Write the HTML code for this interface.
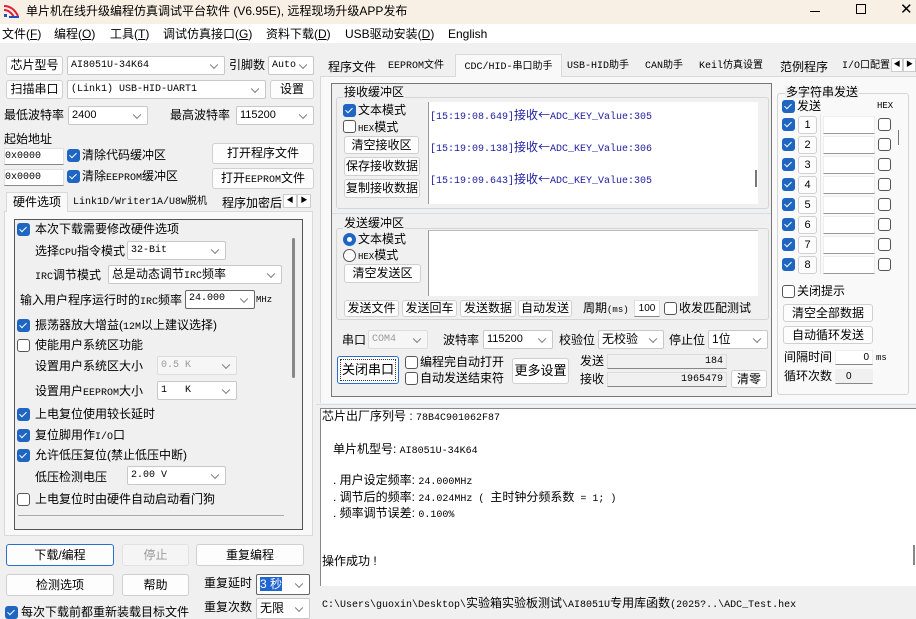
<!DOCTYPE html>
<html><head><meta charset="utf-8"><style>
*{box-sizing:border-box;margin:0;padding:0}
body{width:916px;height:618px;overflow:hidden;background:#f0f0f0;position:relative;font-family:"Liberation Sans","Noto Sans CJK SC",sans-serif;font-size:12px;color:#000}
.a{position:absolute;white-space:nowrap}
.t{line-height:1}
.btn{position:absolute;background:#fdfdfd;border:1px solid #d0d0d0;border-radius:3px;text-align:center;font-size:12px;white-space:nowrap}
.sel{position:absolute;background:#fff;border:1px solid #c8c8c8;border-radius:2px;font-family:"Liberation Mono","Noto Sans CJK SC",monospace;font-size:10px;padding-left:3px;white-space:nowrap;overflow:hidden}
.sel::after{content:"";position:absolute;right:7px;top:50%;width:5px;height:5px;border-right:1px solid #777;border-bottom:1px solid #777;transform:translateY(-70%) rotate(45deg)}
.dis{color:#999;border-color:#ddd;background:#f6f6f6}
.in{position:absolute;background:#fff;border:1px solid #e0e0e0;border-bottom:1px solid #888;font-family:"Liberation Mono",monospace;font-size:10px;white-space:nowrap}
.cb{position:absolute;width:13px;height:13px;border-radius:3px;background:#1f66c2}
.cb::after{content:"";position:absolute;left:4px;top:1.5px;width:3px;height:6px;border-right:1.6px solid #fff;border-bottom:1.6px solid #fff;transform:rotate(45deg)}
.cb.u{background:#fff;border:1px solid #555}
.cb.u::after{display:none}
.grp{position:absolute;border:1px solid #d5d5d5;border-radius:3px}
.gl{position:absolute;background:#f0f0f0;padding:0 1px;font-size:12px;line-height:12px}
.tab{position:absolute;border:1px solid #d9d9d9;border-bottom:none;background:#f0f0f0;text-align:center;font-size:12px}
.mono{font-family:"Liberation Mono","Noto Sans CJK SC",monospace}
.blue{color:#1c1ca0}
</style></head><body>
<div class="a" style="left:0;top:0;width:916px;height:24px;background:#f8efe5"></div>
<svg class="a" style="left:3px;top:4px" width="17" height="15" viewBox="0 0 17 15"><path d="M1 2 Q10 2 15 12" stroke="#e0203a" stroke-width="2" fill="none"/><path d="M1 6 Q7 6 11 13" stroke="#e0203a" stroke-width="2" fill="none"/><rect x="1" y="10" width="3" height="3" fill="#2050c0"/><rect x="6" y="12" width="10" height="2" fill="#2050c0"/></svg>
<div class="a t" style="left:26px;top:5px;font-size:12px">单片机在线升级编程仿真调试平台软件 (V6.95E), 远程现场升级APP发布</div>
<div class="a" style="left:810px;top:11px;width:10px;height:1px;background:#000"></div>
<div class="a" style="left:856px;top:4px;width:10px;height:10px;border:1px solid #000"></div>
<div class="a t" style="left:900px;top:2px;font-size:15px">✕</div>
<div class="a" style="left:0;top:24px;width:916px;height:19px;background:#fff"></div>
<div class="a t" style="left:2px;top:28px">文件(<u>F</u>)</div>
<div class="a t" style="left:54px;top:28px">编程(<u>O</u>)</div>
<div class="a t" style="left:110px;top:28px">工具(<u>T</u>)</div>
<div class="a t" style="left:163px;top:28px">调试仿真接口(<u>G</u>)</div>
<div class="a t" style="left:266px;top:28px">资料下载(<u>D</u>)</div>
<div class="a t" style="left:345px;top:28px">USB驱动安装(<u>D</u>)</div>
<div class="a t" style="left:448px;top:28px">English</div>

<div class="btn" style="left:6px;top:56px;width:57px;height:19px;line-height:17px">芯片型号</div>
<div class="sel" style="left:67px;top:56px;width:158px;height:19px;line-height:17px">AI8051U-34K64</div>
<div class="a t" style="left:229px;top:59px">引脚数</div>
<div class="sel" style="left:268px;top:56px;width:46px;height:19px;line-height:17px">Auto</div>
<div class="btn" style="left:6px;top:80px;width:57px;height:19px;line-height:17px">扫描串口</div>
<div class="sel" style="left:67px;top:80px;width:199px;height:19px;line-height:17px">(Link1) USB-HID-UART1</div>
<div class="btn" style="left:270px;top:80px;width:44px;height:19px;line-height:17px">设置</div>
<div class="a t" style="left:4px;top:109px">最低波特率</div>
<div class="sel" style="left:68px;top:106px;width:80px;height:19px;line-height:17px;font-family:'Liberation Sans';font-size:11px">2400</div>
<div class="a t" style="left:170px;top:109px">最高波特率</div>
<div class="sel" style="left:236px;top:106px;width:78px;height:19px;line-height:17px;font-family:'Liberation Sans';font-size:11px">115200</div>
<div class="a t" style="left:4px;top:133px">起始地址</div>
<div class="in" style="left:4px;top:148px;width:60px;height:17px;line-height:15px">0x0000</div>
<div class="cb" style="left:67px;top:149px"></div>
<div class="a t" style="left:82px;top:149px">清除代码缓冲区</div>
<div class="btn" style="left:212px;top:143px;width:102px;height:21px;line-height:19px">打开程序文件</div>
<div class="in" style="left:4px;top:169px;width:60px;height:17px;line-height:15px">0x0000</div>
<div class="cb" style="left:67px;top:170px"></div>
<div class="a t" style="left:82px;top:170px">清除<span class="mono" style="font-size:10px">EEPROM</span>缓冲区</div>
<div class="btn" style="left:212px;top:168px;width:102px;height:21px;line-height:19px">打开<span class="mono" style="font-size:10px">EEPROM</span>文件</div>
<div class="a" style="left:4px;top:211px;width:309px;height:325px;border:1px solid #d9d9d9;background:#f9f9f9"></div>
<div class="tab" style="left:6px;top:192px;width:62px;height:20px;line-height:19px;background:#f9f9f9">硬件选项</div>
<div class="a t mono" style="left:73px;top:198px;font-size:10px">Link1D/Writer1A/U8W脱机</div>
<div class="a t" style="left:222px;top:197px">程序加密后</div>
<div class="a" style="left:283px;top:194px;width:14px;height:14px;border:1px solid #ccc;background:#fff;font-size:7px;text-align:center;line-height:12px">◀</div>
<div class="a" style="left:297px;top:194px;width:14px;height:14px;border:1px solid #ccc;background:#fff;font-size:7px;text-align:center;line-height:12px">▶</div>
<div class="a" style="left:14px;top:219px;width:289px;height:311px;border:1px solid #555;background:#f0f0f0"></div>
<div class="a" style="left:292px;top:238px;width:3px;height:140px;background:#888;border-radius:2px"></div>
<div class="cb" style="left:17px;top:223px"></div><div class="a t" style="left:35px;top:223px">本次下载需要修改硬件选项</div>
<div class="a t" style="left:35px;top:245px">选择<span class="mono" style="font-size:10px">CPU</span>指令模式</div>
<div class="sel" style="left:127px;top:241px;width:99px;height:19px;line-height:17px">32-Bit</div>
<div class="a t" style="left:35px;top:269px"><span class="mono" style="font-size:10px">IRC</span>调节模式</div>
<div class="sel" style="left:108px;top:265px;width:174px;height:19px;line-height:17px;font-family:'Liberation Sans','Noto Sans CJK SC';font-size:12px">总是动态调节<span class="mono" style="font-size:10px">IRC</span>频率</div>
<div class="a t" style="left:20px;top:294px">输入用户程序运行时的<span class="mono" style="font-size:10px">IRC</span>频率</div>
<div class="sel" style="left:185px;top:290px;width:70px;height:19px;line-height:15px;border-color:#666">24.000</div>
<div class="a t mono" style="left:256px;top:296px;font-size:9px">MHz</div>
<div class="cb" style="left:17px;top:319px"></div><div class="a t" style="left:35px;top:319px">振荡器放大增益(<span class="mono" style="font-size:10px">12M</span>以上建议选择)</div>
<div class="cb u" style="left:17px;top:339px"></div><div class="a t" style="left:35px;top:339px">使能用户系统区功能</div>
<div class="a t" style="left:35px;top:360px">设置用户系统区大小</div>
<div class="sel dis" style="left:157px;top:356px;width:80px;height:19px;line-height:17px">0.5 K</div>
<div class="a t" style="left:35px;top:385px">设置用户<span class="mono" style="font-size:10px">EEPROM</span>大小</div>
<div class="sel" style="left:157px;top:381px;width:80px;height:19px;line-height:17px">1&nbsp;&nbsp;&nbsp;K</div>
<div class="cb" style="left:17px;top:408px"></div><div class="a t" style="left:35px;top:408px">上电复位使用较长延时</div>
<div class="cb" style="left:17px;top:429px"></div><div class="a t" style="left:35px;top:429px">复位脚用作<span class="mono" style="font-size:10px">I/O</span>口</div>
<div class="cb" style="left:17px;top:449px"></div><div class="a t" style="left:35px;top:449px">允许低压复位(禁止低压中断)</div>
<div class="a t" style="left:35px;top:471px">低压检测电压</div>
<div class="sel" style="left:127px;top:466px;width:99px;height:19px;line-height:17px">2.00 V</div>
<div class="cb u" style="left:17px;top:493px"></div><div class="a t" style="left:35px;top:493px">上电复位时由硬件自动启动看门狗</div>
<div class="a" style="left:18px;top:515px;width:266px;height:1px;background:#aaa"></div>
<div class="btn" style="left:6px;top:544px;width:108px;height:22px;line-height:20px;border-color:#2a6fd0">下载/编程</div>
<div class="btn" style="left:122px;top:544px;width:67px;height:22px;line-height:20px;color:#999;border-color:#e2e2e2;background:#f5f5f5">停止</div>
<div class="btn" style="left:196px;top:544px;width:108px;height:22px;line-height:20px">重复编程</div>
<div class="btn" style="left:6px;top:574px;width:108px;height:22px;line-height:20px">检测选项</div>
<div class="btn" style="left:122px;top:574px;width:67px;height:22px;line-height:20px">帮助</div>
<div class="a t" style="left:204px;top:577px">重复延时</div>
<div class="sel" style="left:256px;top:574px;width:54px;height:21px;line-height:19px;border-color:#666"><span style="background:#1f66d0;color:#fff;font-family:'Liberation Sans','Noto Sans CJK SC';font-size:12px">3 秒</span></div>
<div class="cb" style="left:5px;top:606px"></div><div class="a t" style="left:21px;top:606px">每次下载前都重新装载目标文件</div>
<div class="a t" style="left:204px;top:601px">重复次数</div>
<div class="sel" style="left:256px;top:598px;width:54px;height:21px;line-height:19px;font-family:'Liberation Sans','Noto Sans CJK SC';font-size:12px">无限</div>

<div class="a" style="left:320px;top:76px;width:596px;height:327px;border-top:1px solid #d9d9d9;border-left:1px solid #d9d9d9;background:#f9f9f9"></div>
<div class="a t" style="left:328px;top:61px">程序文件</div>
<div class="a t mono" style="left:388px;top:62px;font-size:10px">EEPROM文件</div>
<div class="tab" style="left:455px;top:54px;width:107px;height:23px;line-height:20px;background:#f9f9f9"><span class="mono" style="font-size:10px">CDC/HID-串口助手</span></div>
<div class="a t mono" style="left:567px;top:62px;font-size:10px">USB-HID助手</div>
<div class="a t mono" style="left:645px;top:62px;font-size:10px">CAN助手</div>
<div class="a t mono" style="left:699px;top:62px;font-size:10px">Keil仿真设置</div>
<div class="a t" style="left:780px;top:61px">范例程序</div>
<div class="a t mono" style="left:842px;top:62px;font-size:10px">I/O口配置</div>
<div class="a" style="left:891px;top:58px;width:12px;height:14px;border:1px solid #ccc;background:#fff;font-size:7px;text-align:center;line-height:12px">◀</div>
<div class="a" style="left:903px;top:58px;width:13px;height:14px;border:1px solid #ccc;background:#fff;font-size:7px;text-align:center;line-height:12px">▶</div>
<div class="a" style="left:331px;top:83px;width:441px;height:314px;border:1px solid #777;background:#f0f0f0"></div>
<div class="grp" style="left:336px;top:97px;width:433px;height:112px"></div>
<div class="gl" style="left:343px;top:86px">接收缓冲区</div>
<div class="cb" style="left:343px;top:104px"></div><div class="a t" style="left:358px;top:104px">文本模式</div>
<div class="cb u" style="left:343px;top:120px"></div><div class="a t" style="left:358px;top:121px"><span class="mono" style="font-size:9px">HEX</span>模式</div>
<div class="btn" style="left:344px;top:136px;width:75px;height:18px;line-height:16px">清空接收区</div>
<div class="btn" style="left:344px;top:157px;width:76px;height:19px;line-height:17px">保存接收数据</div>
<div class="btn" style="left:344px;top:179px;width:76px;height:19px;line-height:17px">复制接收数据</div>
<div class="a" style="left:428px;top:102px;width:330px;height:102px;background:#fff;border-left:1px solid #999"></div>
<div class="a t mono blue" style="left:430px;top:109px;font-size:10px">[15:19:08.649]<span style="font-family:'Noto Sans CJK SC';font-size:12px">接收←</span>ADC_KEY_Value:305</div>
<div class="a t mono blue" style="left:430px;top:141px;font-size:10px">[15:19:09.138]<span style="font-family:'Noto Sans CJK SC';font-size:12px">接收←</span>ADC_KEY_Value:306</div>
<div class="a t mono blue" style="left:430px;top:173px;font-size:10px">[15:19:09.643]<span style="font-family:'Noto Sans CJK SC';font-size:12px">接收←</span>ADC_KEY_Value:305</div>
<div class="a" style="left:755px;top:170px;width:2px;height:17px;background:#777"></div>
<div class="a" style="left:332px;top:213px;width:439px;height:1px;background:#cfe0ea"></div>
<div class="grp" style="left:336px;top:228px;width:433px;height:92px"></div>
<div class="gl" style="left:343px;top:217px">发送缓冲区</div>
<div class="a" style="left:343px;top:233px;width:13px;height:13px;border-radius:50%;background:#1f66c2"><div style="position:absolute;left:4px;top:4px;width:5px;height:5px;border-radius:50%;background:#fff"></div></div>
<div class="a t" style="left:358px;top:233px">文本模式</div>
<div class="a" style="left:343px;top:249px;width:13px;height:13px;border-radius:50%;border:1px solid #555;background:#fff"></div>
<div class="a t" style="left:358px;top:249px"><span class="mono" style="font-size:9px">HEX</span>模式</div>
<div class="btn" style="left:344px;top:264px;width:77px;height:19px;line-height:17px">清空发送区</div>
<div class="a" style="left:428px;top:230px;width:330px;height:66px;background:#fff;border-left:1px solid #999;border-top:1px solid #bbb"></div>
<div class="btn" style="left:344px;top:300px;width:55px;height:17px;line-height:15px">发送文件</div>
<div class="btn" style="left:402px;top:300px;width:55px;height:17px;line-height:15px">发送回车</div>
<div class="btn" style="left:460px;top:300px;width:56px;height:17px;line-height:15px">发送数据</div>
<div class="btn" style="left:518px;top:300px;width:54px;height:17px;line-height:15px">自动发送</div>
<div class="a t" style="left:583px;top:302px">周期<span class="mono" style="font-size:9px">(ms)</span></div>
<div class="in" style="left:634px;top:300px;width:26px;height:17px;line-height:15px;text-align:center;font-size:10px;font-family:'Liberation Sans'">100</div>
<div class="cb u" style="left:664px;top:302px"></div><div class="a t" style="left:679px;top:302px">收发匹配测试</div>
<div class="a t" style="left:342px;top:334px">串口</div>
<div class="sel dis" style="left:368px;top:330px;width:60px;height:19px;line-height:17px">COM4</div>
<div class="a t" style="left:443px;top:334px">波特率</div>
<div class="sel" style="left:483px;top:330px;width:70px;height:19px;line-height:17px;font-family:'Liberation Sans';font-size:11px">115200</div>
<div class="a t" style="left:559px;top:334px">校验位</div>
<div class="sel" style="left:598px;top:330px;width:66px;height:19px;line-height:17px;font-family:'Liberation Sans','Noto Sans CJK SC';font-size:12px">无校验</div>
<div class="a t" style="left:669px;top:334px">停止位</div>
<div class="sel" style="left:708px;top:330px;width:60px;height:19px;line-height:17px;font-family:'Liberation Sans','Noto Sans CJK SC';font-size:12px">1位</div>
<div class="btn" style="left:337px;top:356px;width:62px;height:28px;line-height:26px;border-color:#2a6fd0;font-size:13px"><span style="display:block;margin:2px;line-height:20px;border:1px dotted #333">关闭串口</span></div>
<div class="cb u" style="left:405px;top:356px"></div><div class="a t" style="left:420px;top:356px">编程完自动打开</div>
<div class="cb u" style="left:405px;top:372px"></div><div class="a t" style="left:420px;top:372px">自动发送结束符</div>
<div class="btn" style="left:512px;top:358px;width:57px;height:26px;line-height:24px;font-size:13px">更多设置</div>
<div class="a t" style="left:580px;top:355px">发送</div>
<div class="a t" style="left:580px;top:373px">接收</div>
<div class="in" style="left:607px;top:354px;width:120px;height:15px;line-height:13px;text-align:right;padding-right:3px;background:#f0f0f0;border-color:#ddd #ddd #888">184</div>
<div class="in" style="left:607px;top:372px;width:120px;height:15px;line-height:13px;text-align:right;padding-right:3px;background:#f0f0f0;border-color:#ddd #ddd #888">1965479</div>
<div class="btn" style="left:731px;top:370px;width:36px;height:18px;line-height:16px">清零</div>
<div class="grp" style="left:777px;top:93px;width:132px;height:302px"></div>
<div class="gl" style="left:785px;top:86px">多字符串发送</div>
<div class="cb" style="left:782px;top:100px"></div><div class="a t" style="left:797px;top:100px">发送</div>
<div class="a t mono" style="left:877px;top:102px;font-size:9px">HEX</div>
<div class="a" style="left:898px;top:130px;width:1px;height:15px;background:#777"></div>
<div class="a" style="left:820px;top:114px;width:1px;height:160px;background:#e4e4e4"></div>
<div class="cb u" style="left:782px;top:285px"></div><div class="a t" style="left:797px;top:285px">关闭提示</div>
<div class="btn" style="left:783px;top:304px;width:90px;height:18px;line-height:16px">清空全部数据</div>
<div class="btn" style="left:783px;top:326px;width:90px;height:18px;line-height:16px">自动循环发送</div>
<div class="a t" style="left:784px;top:351px">间隔时间</div>
<div class="in" style="left:835px;top:350px;width:38px;height:15px;line-height:13px;text-align:right;padding-right:3px;border-color:#eee #eee #888;font-family:'Liberation Sans'">0</div>
<div class="a t mono" style="left:876px;top:354px;font-size:9px">ms</div>
<div class="a t" style="left:784px;top:370px">循环次数</div>
<div class="in" style="left:835px;top:369px;width:38px;height:15px;line-height:13px;padding-left:10px;background:#f0f0f0;border-color:#f0f0f0 #f0f0f0 #888;font-family:'Liberation Sans'">0</div>

<div class="a" style="left:316px;top:404px;width:600px;height:1px;background:#cfe0ea"></div>
<div class="a" style="left:320px;top:408px;width:596px;height:178px;background:#fff;border-left:1px solid #888;border-top:1px solid #888"></div>
<div class="a" style="left:913px;top:545px;width:2px;height:20px;background:#888"></div>
<div class="a t" style="left:322px;top:410px">芯片出厂序列号 : <span class="mono" style="font-size:10px">78B4C901062F87</span></div>
<div class="a t" style="left:333px;top:443px">单片机型号: <span class="mono" style="font-size:10px">AI8051U-34K64</span></div>
<div class="a t" style="left:333px;top:474px">. 用户设定频率: <span class="mono" style="font-size:10px">24.000MHz</span></div>
<div class="a t" style="left:333px;top:491px">. 调节后的频率: <span class="mono" style="font-size:10px">24.024MHz ( </span>主时钟分频系数<span class="mono" style="font-size:10px"> = 1; )</span></div>
<div class="a t" style="left:333px;top:507px">. 频率调节误差: <span class="mono" style="font-size:10px">0.100%</span></div>
<div class="a t" style="left:322px;top:555px">操作成功 !</div>
<div class="a" style="left:320px;top:593px;width:596px;height:20px;background:#f0f0f0"></div>
<div class="a t" style="left:322px;top:597px"><span class="mono" style="font-size:10px">C:\Users\guoxin\Desktop\</span>实验箱实验板测试<span class="mono" style="font-size:10px">\AI8051U</span>专用库函数<span class="mono" style="font-size:10px">(2025?..\ADC_Test.hex</span></div>

<div class="cb" style="left:782px;top:118px"></div><div class="btn" style="left:798px;top:116px;width:19px;height:18px;line-height:16px;font-size:11px">1</div><div class="in" style="left:823px;top:116px;width:52px;height:18px;border-color:#eee #eee #999"></div><div class="cb u" style="left:878px;top:118px"></div>
<div class="cb" style="left:782px;top:138px"></div><div class="btn" style="left:798px;top:136px;width:19px;height:18px;line-height:16px;font-size:11px">2</div><div class="in" style="left:823px;top:136px;width:52px;height:18px;border-color:#eee #eee #999"></div><div class="cb u" style="left:878px;top:138px"></div>
<div class="cb" style="left:782px;top:158px"></div><div class="btn" style="left:798px;top:156px;width:19px;height:18px;line-height:16px;font-size:11px">3</div><div class="in" style="left:823px;top:156px;width:52px;height:18px;border-color:#eee #eee #999"></div><div class="cb u" style="left:878px;top:158px"></div>
<div class="cb" style="left:782px;top:178px"></div><div class="btn" style="left:798px;top:176px;width:19px;height:18px;line-height:16px;font-size:11px">4</div><div class="in" style="left:823px;top:176px;width:52px;height:18px;border-color:#eee #eee #999"></div><div class="cb u" style="left:878px;top:178px"></div>
<div class="cb" style="left:782px;top:198px"></div><div class="btn" style="left:798px;top:196px;width:19px;height:18px;line-height:16px;font-size:11px">5</div><div class="in" style="left:823px;top:196px;width:52px;height:18px;border-color:#eee #eee #999"></div><div class="cb u" style="left:878px;top:198px"></div>
<div class="cb" style="left:782px;top:218px"></div><div class="btn" style="left:798px;top:216px;width:19px;height:18px;line-height:16px;font-size:11px">6</div><div class="in" style="left:823px;top:216px;width:52px;height:18px;border-color:#eee #eee #999"></div><div class="cb u" style="left:878px;top:218px"></div>
<div class="cb" style="left:782px;top:238px"></div><div class="btn" style="left:798px;top:236px;width:19px;height:18px;line-height:16px;font-size:11px">7</div><div class="in" style="left:823px;top:236px;width:52px;height:18px;border-color:#eee #eee #999"></div><div class="cb u" style="left:878px;top:238px"></div>
<div class="cb" style="left:782px;top:258px"></div><div class="btn" style="left:798px;top:256px;width:19px;height:18px;line-height:16px;font-size:11px">8</div><div class="in" style="left:823px;top:256px;width:52px;height:18px;border-color:#eee #eee #999"></div><div class="cb u" style="left:878px;top:258px"></div>
</body></html>
